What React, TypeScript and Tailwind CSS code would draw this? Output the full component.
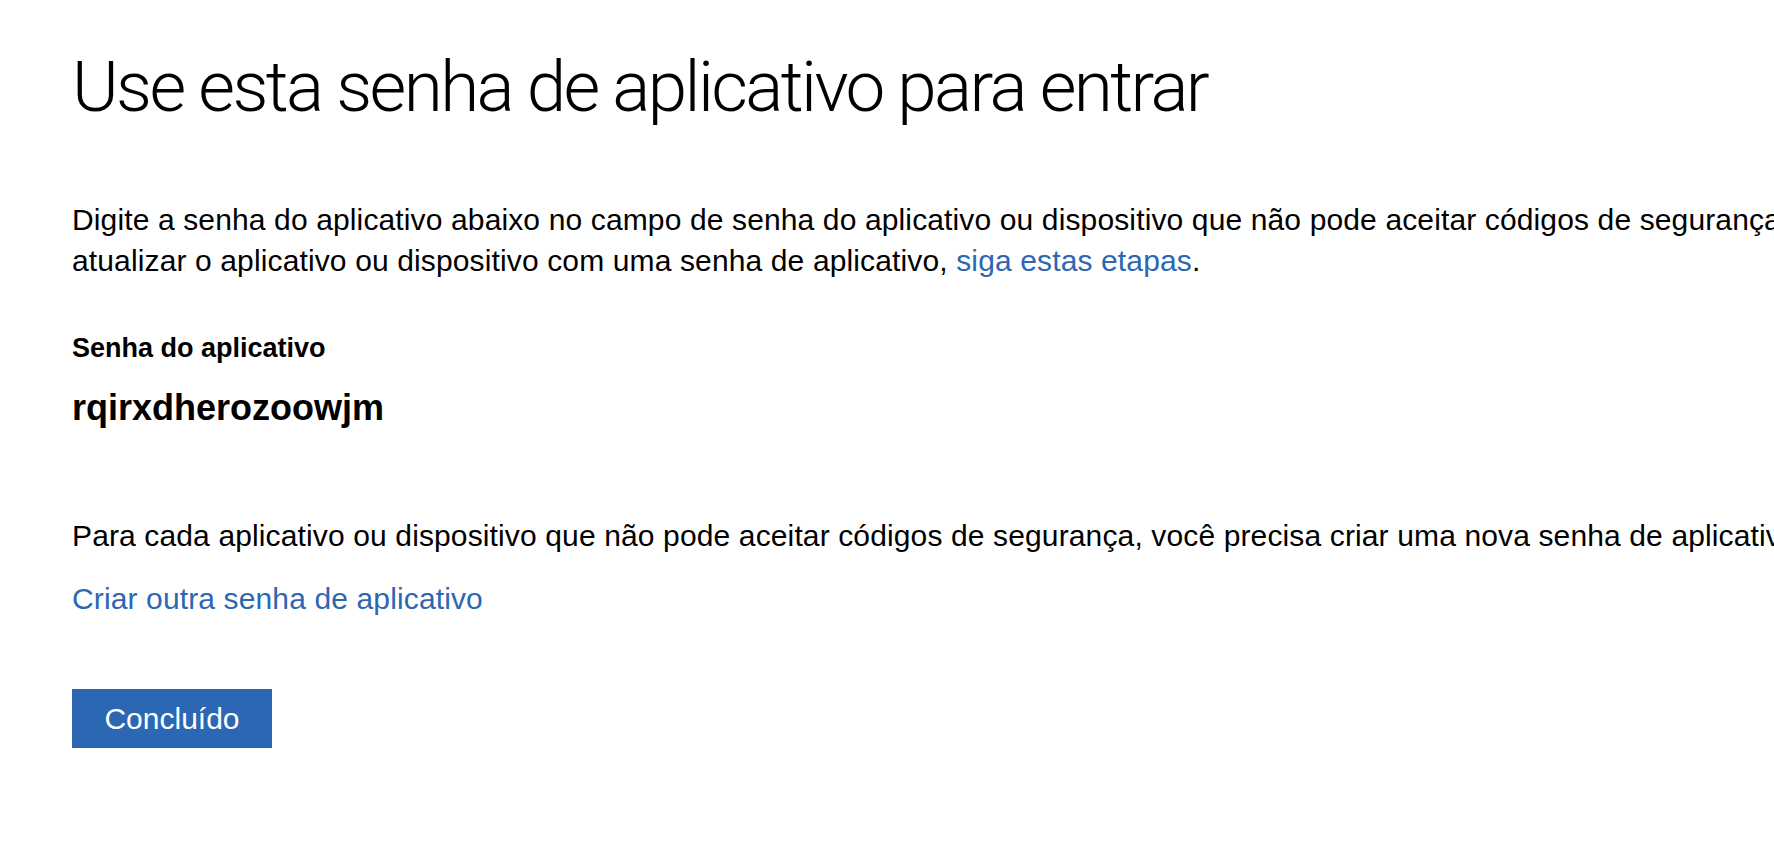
export default function App() {
  return (
    <div className="min-h-screen w-full overflow-hidden bg-white text-black font-['Liberation_Sans',Arial,sans-serif]">
      <div className="w-[2400px] pl-[72px] pt-[44px]">
        <h1 className="font-['Roboto',sans-serif] font-light text-[71px] leading-[85px] tracking-[-2.6px]">
          Use esta senha de aplicativo para entrar
        </h1>

        <p className="mt-[70px] text-[30px] leading-[41px] tracking-[0.13px] whitespace-nowrap">
          Digite a senha do aplicativo abaixo no campo de senha do aplicativo ou dispositivo que não pode aceitar códigos de segurança. Para obter ajuda para
          <br />
          atualizar o aplicativo ou dispositivo com uma senha de aplicativo,{' '}
          <a href="#" className="text-[#2b67b3]">
            siga estas etapas
          </a>
          .
        </p>

        <div className="mt-[50px] text-[27px] leading-[34px] font-bold">Senha do aplicativo</div>
        <div className="mt-[21px] text-[36px] leading-[44px] font-bold">rqirxdherozoowjm</div>

        <p className="mt-[85px] text-[30px] leading-[41px] tracking-[0.13px] whitespace-nowrap">
          Para cada aplicativo ou dispositivo que não pode aceitar códigos de segurança, você precisa criar uma nova senha de aplicativo.
        </p>

        <a href="#" className="mt-[22px] block w-fit text-[30px] leading-[41px] tracking-[0.13px] text-[#2b67b3]">
          Criar outra senha de aplicativo
        </a>

        <button className="mt-[70px] h-[59px] w-[200px] bg-[#2b67b3] text-[30px] text-white">
          Concluído
        </button>
      </div>
    </div>
  );
}
